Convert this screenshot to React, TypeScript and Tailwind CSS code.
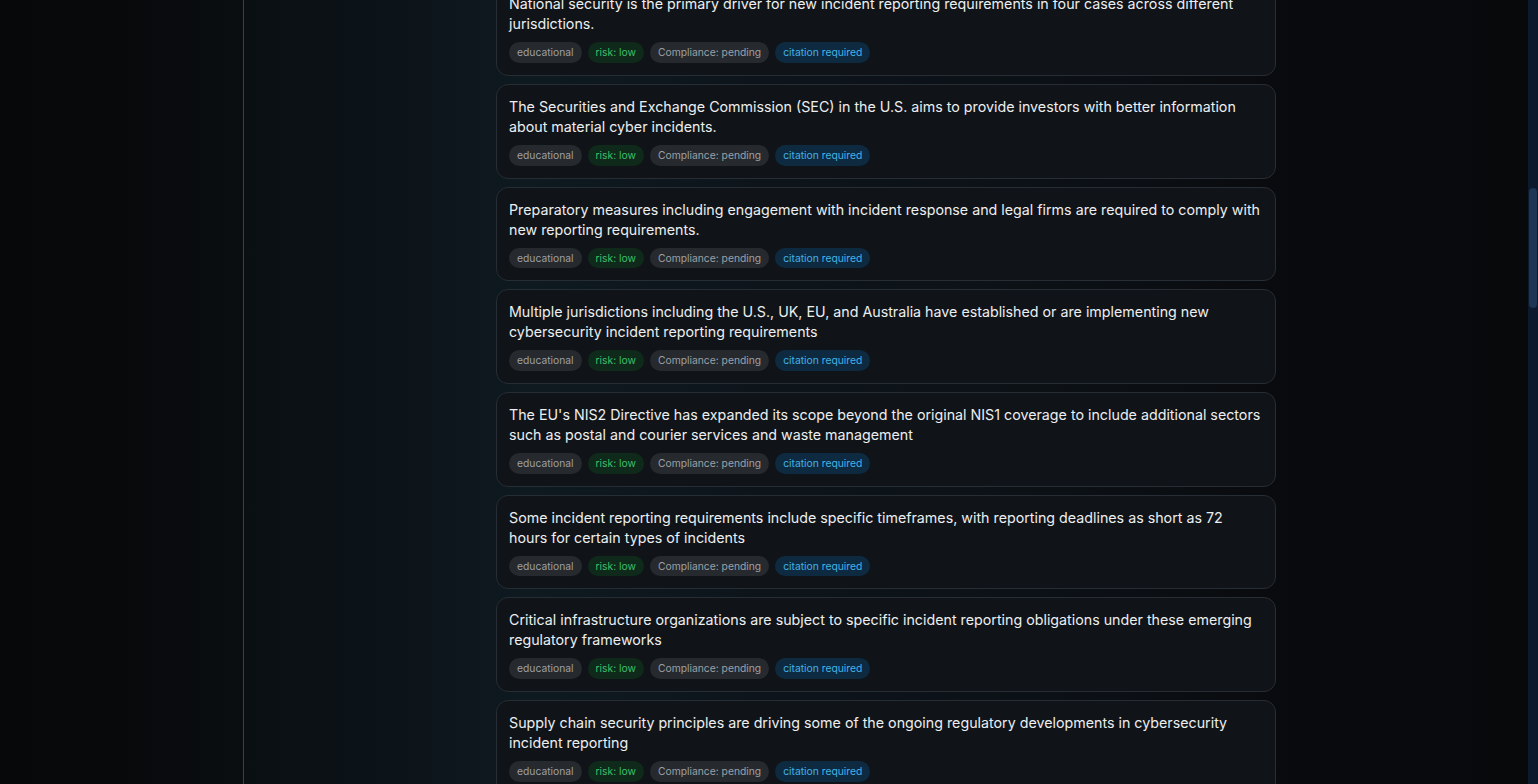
import React from "react";

const claims = [
  "National security is the primary driver for new incident reporting requirements in four cases across different jurisdictions.",
  "The Securities and Exchange Commission (SEC) in the U.S. aims to provide investors with better information about material cyber incidents.",
  "Preparatory measures including engagement with incident response and legal firms are required to comply with new reporting requirements.",
  "Multiple jurisdictions including the U.S., UK, EU, and Australia have established or are implementing new cybersecurity incident reporting requirements",
  "The EU's NIS2 Directive has expanded its scope beyond the original NIS1 coverage to include additional sectors such as postal and courier services and waste management",
  "Some incident reporting requirements include specific timeframes, with reporting deadlines as short as 72 hours for certain types of incidents",
  "Critical infrastructure organizations are subject to specific incident reporting obligations under these emerging regulatory frameworks",
  "Supply chain security principles are driving some of the ongoing regulatory developments in cybersecurity incident reporting",
];

function Tag({ children, tone }: { children: React.ReactNode; tone: "gray" | "green" | "blue" }) {
  const tones = {
    gray: "bg-[#26292e] text-[#9ca0a6]",
    green: "bg-[#0f2a1b] text-[#3fbf6a]",
    blue: "bg-[#0e2a40] text-[#44b2e6]",
  };
  return (
    <span className={`rounded-full px-2 py-0.5 text-[10.3px] leading-[16.7px] ${tones[tone]}`}>
      {children}
    </span>
  );
}

function ClaimCard({ text }: { text: string }) {
  return (
    <div className="rounded-xl border border-[#272d34] bg-[#111418]/95 p-3">
      <p className="text-[14.25px] leading-5 text-[#eceef0]">{text}</p>
      <div className="mt-2 flex gap-1.5">
        <Tag tone="gray">educational</Tag>
        <Tag tone="green">risk: low</Tag>
        <Tag tone="gray">Compliance: pending</Tag>
        <Tag tone="blue">citation required</Tag>
      </div>
    </div>
  );
}

export default function App() {
  return (
    <div
      className="flex h-screen overflow-hidden bg-[#08090b]"
      style={{ fontFamily: "Inter, 'Noto Sans', sans-serif" }}
    >
      {/* sidebar */}
      <aside className="w-[244px] shrink-0 border-r border-[#3b4046] bg-gradient-to-r from-[#07080a] via-[#08090b] to-[#0a0e11]" />

      {/* main column */}
      <main className="flex-1 bg-[linear-gradient(90deg,#0a0f12_0%,#0c1419_12%,#0e1920_22%,#0d151b_40%,#0b0f13_70%,#090a0d_82%,#08090b_100%)]">
        <div className="mx-auto -mt-[18.9px] flex max-w-[780px] flex-col gap-2">
          {claims.map((c) => (
            <ClaimCard key={c} text={c} />
          ))}
        </div>
      </main>

      {/* scrollbar */}
      <div className="w-[10px] shrink-0 bg-[#0b1a2c] pt-[188px]">
        <div className="mx-auto h-[120px] w-[8px] rounded-full bg-[#1d3656]" />
      </div>
    </div>
  );
}
